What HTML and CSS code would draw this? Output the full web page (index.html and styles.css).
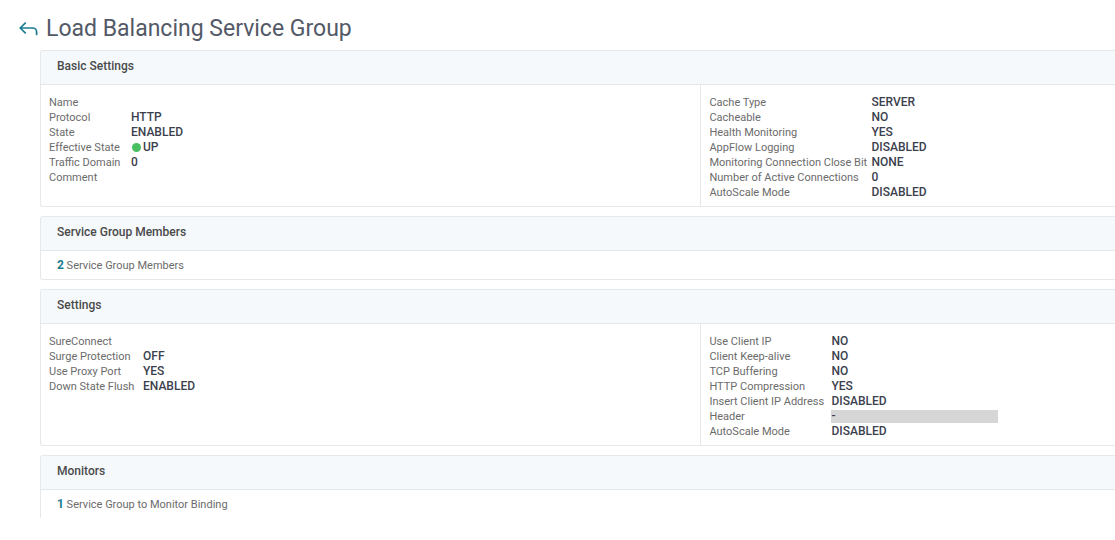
FILE: index.html
```html
<!DOCTYPE html>
<html lang="en">
<head>
<meta charset="utf-8">
<title>Load Balancing Service Group</title>
<link rel="stylesheet" href="styles.css">
</head>
<body>
<header class="page-header">
  <button class="back" type="button" aria-label="Back">
    <svg width="19" height="15" viewBox="0 0 19 15" fill="none" stroke="#1a7c90" stroke-width="1.7" stroke-linecap="round" stroke-linejoin="round"><path d="M6.2 1.2 1.2 6l5 4.8M1.4 6h12.2a4 4 0 0 1 4 4v2.4"/></svg>
  </button>
  <h1>Load Balancing Service Group</h1>
</header>
<main>
  <section class="panel">
    <h2>Basic Settings</h2>
    <div class="columns">
      <dl class="props label-xs">
        <dt>Name</dt><dd></dd>
        <dt>Protocol</dt><dd>HTTP</dd>
        <dt>State</dt><dd>ENABLED</dd>
        <dt>Effective State</dt><dd class="status"><span class="dot"></span>UP</dd>
        <dt>Traffic Domain</dt><dd>0</dd>
        <dt>Comment</dt><dd></dd>
      </dl>
      <dl class="props label-lg">
        <dt>Cache Type</dt><dd>SERVER</dd>
        <dt>Cacheable</dt><dd>NO</dd>
        <dt>Health Monitoring</dt><dd>YES</dd>
        <dt>AppFlow Logging</dt><dd>DISABLED</dd>
        <dt>Monitoring Connection Close Bit</dt><dd>NONE</dd>
        <dt>Number of Active Connections</dt><dd>0</dd>
        <dt>AutoScale Mode</dt><dd>DISABLED</dd>
      </dl>
    </div>
  </section>
  <section class="panel">
    <h2>Service Group Members</h2>
    <a class="binding" href="#members"><b>2</b> Service Group Members</a>
  </section>
  <section class="panel">
    <h2>Settings</h2>
    <div class="columns">
      <dl class="props label-sm">
        <dt>SureConnect</dt><dd></dd>
        <dt>Surge Protection</dt><dd>OFF</dd>
        <dt>Use Proxy Port</dt><dd>YES</dd>
        <dt>Down State Flush</dt><dd>ENABLED</dd>
      </dl>
      <dl class="props label-md">
        <dt>Use Client IP</dt><dd>NO</dd>
        <dt>Client Keep-alive</dt><dd>NO</dd>
        <dt>TCP Buffering</dt><dd>NO</dd>
        <dt>HTTP Compression</dt><dd>YES</dd>
        <dt>Insert Client IP Address</dt><dd>DISABLED</dd>
        <dt>Header</dt><dd class="masked">-</dd>
        <dt>AutoScale Mode</dt><dd>DISABLED</dd>
      </dl>
    </div>
  </section>
  <section class="panel open">
    <h2>Monitors</h2>
    <a class="binding" href="#monitors"><b>1</b> Service Group to Monitor Binding</a>
  </section>
</main>
</body>
</html>
```

FILE: styles.css
```css
* { box-sizing: border-box; }
body {
  margin: 0;
  background: #fff;
  color: #6b6b6b;
  font-family: Roboto, "Liberation Sans", sans-serif;
  font-size: 11px;
  line-height: 15px;
}
.page-header {
  display: flex;
  align-items: center;
  gap: 8px;
  padding: 13px 0 5px 19px;
}
.back {
  display: flex;
  padding: 0;
  border: 0;
  background: none;
}
h1 {
  margin: 0;
  color: #535967;
  font-size: 23px;
  font-weight: 400;
  line-height: 32px;
}
main {
  display: flex;
  flex-direction: column;
  gap: 9px;
  padding-left: 40px;
}
.panel {
  border: 1px solid #e5e9ec;
  border-right: 0;
  border-radius: 3px 0 0 3px;
  overflow: hidden;
}
.panel.open {
  border-bottom: 0;
  border-bottom-left-radius: 0;
}
h2 {
  margin: 0;
  padding: 6px 16px 9px;
  border-bottom: 1px solid #e2e8ec;
  background: #f5f9fc;
  color: #4a4a4a;
  font-size: 12px;
  font-weight: 500;
  line-height: 18px;
}
.columns {
  display: grid;
  grid-template-columns: 61.4% 1fr;
}
.props {
  display: grid;
  grid-auto-rows: 15px;
  align-items: center;
  margin: 0;
  padding: 10px 8px 6px;
}
.label-xs { grid-template-columns: 82px 1fr; }
.label-sm { grid-template-columns: 94px 1fr; }
.label-md { grid-template-columns: 122px 1fr; }
.label-lg { grid-template-columns: 162px 1fr; }
.props + .props { border-left: 1px solid #e5e9ec; }
.props dt { white-space: nowrap; }
.props dd {
  margin: 0;
  color: #3c3f4d;
  font-size: 12px;
  font-weight: 500;
}
.status {
  display: flex;
  align-items: center;
  gap: 2px;
  padding-left: 1px;
}
.dot {
  width: 9px;
  height: 9px;
  border-radius: 50%;
  background: #48bf60;
}
.props .masked {
  width: 167px;
  height: 13px;
  background: #d6d6d6;
  line-height: 13px;
}
.binding {
  display: block;
  padding: 7px 16px 6px;
  color: #6b6b6b;
  text-decoration: none;
}
.binding b {
  color: #1a7c90;
  font-size: 12px;
  font-weight: 700;
}
```
